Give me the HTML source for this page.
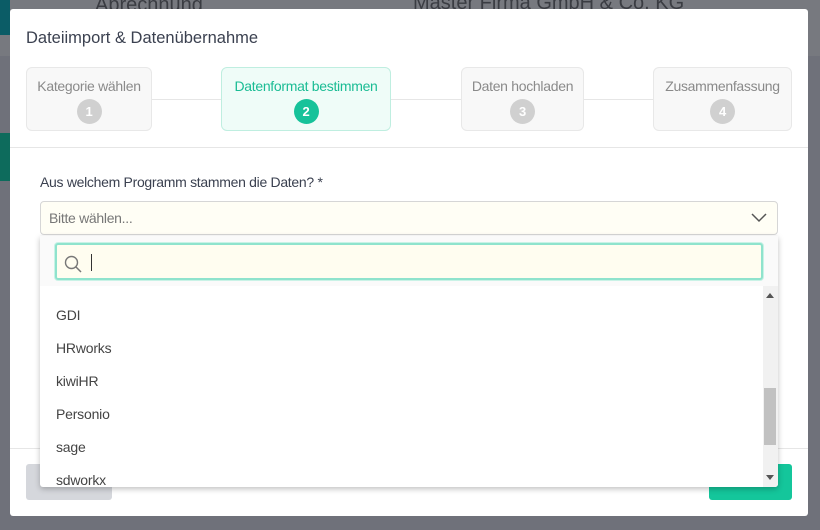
<!DOCTYPE html>
<html><head><style>
*{box-sizing:border-box;margin:0;padding:0}
body{width:820px;height:530px;overflow:hidden;background:#6f717a;font-family:"Liberation Sans",sans-serif;position:relative}
.hdr{position:absolute;left:0;top:0;width:820px;height:56px;background:#77797f}
.teal{position:absolute;left:0;top:0;width:10px;height:35px;background:#0b5c66}
.teal2{position:absolute;left:0;top:133px;width:10px;height:48px;background:#0d6b5c}
.bgtxt{position:absolute;color:#3a3c42;font-size:20px}
.modal{position:absolute;left:10px;top:9px;width:798px;height:507px;background:#fff;border-radius:3px}
.title{position:absolute;left:16px;top:20px;font-size:16.5px;color:#3b4150}
.step{position:absolute;top:58px;height:64px;border:1px solid #e8e8e8;background:#f8f8f8;border-radius:6px;text-align:center;font-size:14px;color:#8a8a8a;padding-top:10px;letter-spacing:-.3px}
.step .n{display:block;margin:5px auto 0;width:25px;height:25px;border-radius:50%;background:#d0d0d0;color:#fff;font-weight:bold;font-size:13px;line-height:25px}
.step.a{background:#effcf8;border-color:#bfeee0;color:#1abc94}
.step.a .n{background:#16c29a}
.line{position:absolute;top:90px;height:1px;background:#e6e6e6}
.sep{position:absolute;left:0;top:138px;width:798px;height:1px;background:#e6e6e6}
.lbl{position:absolute;left:30px;top:165px;font-size:14px;color:#3b4150;letter-spacing:-.3px}
.sel{position:absolute;left:30px;top:192px;width:738px;height:34px;border:1px solid #d6d6d6;border-radius:4px;background:#fffef5;font-size:14px;color:#777;padding:8px 8px;letter-spacing:-.3px}
.sep2{position:absolute;left:0;top:439px;width:798px;height:1px;background:#e6e6e6}
.btnl{position:absolute;left:16px;top:455px;width:86px;height:36px;background:#d5d7dc;border-radius:3px}
.btnr{position:absolute;left:699px;top:455px;width:83px;height:36px;background:#14c69b;border-radius:3px}
.dd{position:absolute;left:40px;top:236px;width:738px;height:251px;background:#fff;box-shadow:0 2px 6px rgba(0,0,0,.25);border-radius:0 0 3px 3px;overflow:hidden}
.srchwrap{position:absolute;left:0;top:0;width:738px;height:50px;background:#fafafa}
.srch{position:absolute;left:15px;top:7px;width:708px;height:37px;border:2px solid #8fe3cd;border-radius:3px;background:#fffdf0;box-shadow:0 0 0 1px #c9f2e6}
.cur{position:absolute;left:34px;top:9px;width:1px;height:17px;background:#333}
.it{position:absolute;left:16px;font-size:14px;color:#444;letter-spacing:-.2px}
.sb{position:absolute;left:723px;top:50px;width:15px;height:201px;background:#f1f1f1}
.th{position:absolute;left:724px;top:152px;width:12px;height:57px;background:#c1c1c1}
</style></head><body>
<div class="hdr"></div><div class="teal"></div><div class="teal2"></div>
<div class="bgtxt" style="left:95px;top:-6px">Abrechnung</div>
<div class="bgtxt" style="left:413px;top:-8px">Master Firma GmbH &amp; Co. KG</div>
<div class="modal">
<div class="title">Dateiimport &amp; Datenübernahme</div>
<div class="line" style="left:142px;width:520px"></div>
<div class="step" style="left:16px;width:126px">Kategorie wählen<span class="n">1</span></div>
<div class="step a" style="left:211px;width:170px">Datenformat bestimmen<span class="n">2</span></div>
<div class="step" style="left:451px;width:123px">Daten hochladen<span class="n">3</span></div>
<div class="step" style="left:643px;width:139px">Zusammenfassung<span class="n">4</span></div>
<div class="sep"></div>
<div class="lbl">Aus welchem Programm stammen die Daten? *</div>
<div class="sel">Bitte wählen...<svg style="position:absolute;right:10px;top:11px" width="16" height="10" viewBox="0 0 16 10"><path d="M1 1l7 7 7-7" stroke="#555" stroke-width="1.5" fill="none"/></svg></div>
<div class="sep2"></div>
<div class="btnl"></div><div class="btnr"></div>
</div>
<div class="dd">
<div class="srchwrap"><div class="srch">
<svg style="position:absolute;left:7px;top:10px" width="18" height="18" viewBox="0 0 18 18"><circle cx="7.5" cy="7.5" r="6" stroke="#777" stroke-width="1.4" fill="none"/><path d="M12 12l5 5" stroke="#777" stroke-width="1.5"/></svg>
<div class="cur"></div></div></div>
<div class="it" style="top:71px">GDI</div>
<div class="it" style="top:104px">HRworks</div>
<div class="it" style="top:137px">kiwiHR</div>
<div class="it" style="top:170px">Personio</div>
<div class="it" style="top:203px">sage</div>
<div class="it" style="top:236px">sdworkx</div>
<div class="sb"></div><div class="th"></div>
<div style="position:absolute;left:726px;top:57px;width:0;height:0;border:4px solid transparent;border-bottom:5px solid #555;border-top:0"></div>
<div style="position:absolute;left:726px;top:239px;width:0;height:0;border:4px solid transparent;border-top:5px solid #555;border-bottom:0"></div>
</div>
</body></html>
